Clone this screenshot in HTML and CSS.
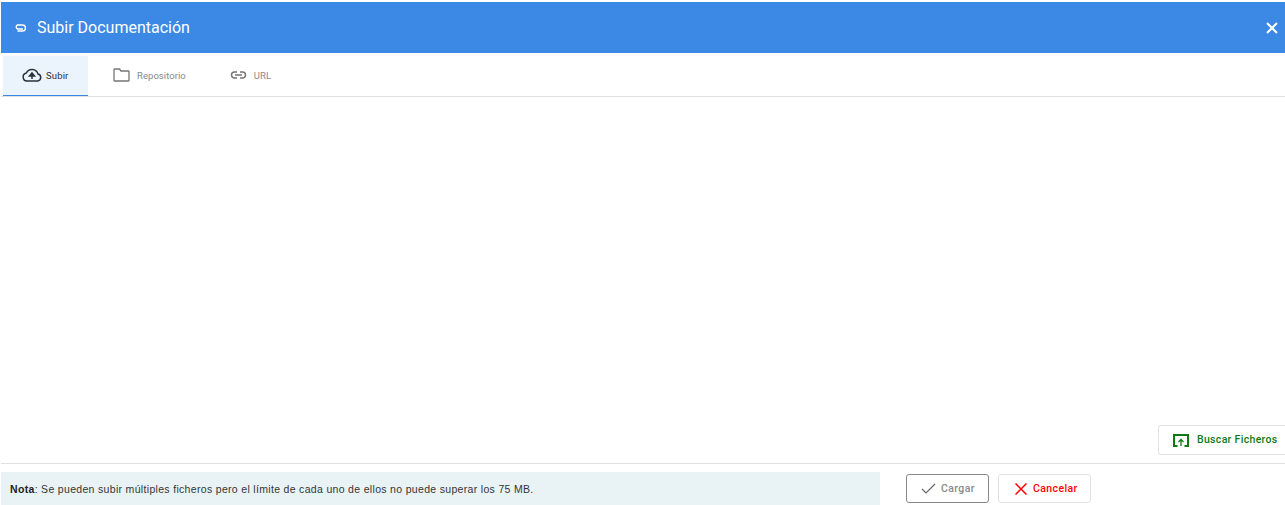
FILE: index.html
```html
<!DOCTYPE html>
<html lang="es">
<head>
<meta charset="utf-8">
<title>Subir Documentación</title>
<link rel="stylesheet" href="styles.css">
</head>
<body>
<div class="dialog">
  <header class="titlebar">
    <div class="title">
      <svg class="clip" width="12" height="8" viewBox="0 0 12 8"><path d="M3.500 7H8.500A2.800 2.800 0 0 0 8.500 1H3.500A2.200 2.200 0 0 0 3.500 5H9" fill="none" stroke="#fff" stroke-width="1.400"/></svg>
      <span>Subir Documentación</span>
    </div>
    <svg class="close" width="12" height="12" viewBox="0 0 12 12"><path d="M1 1L11 11M11 1L1 11" stroke="#fff" stroke-width="2"/></svg>
  </header>
  <nav class="tabs">
    <div class="tab active">
      <svg width="20" height="14" viewBox="0 0 20 14"><path d="M5 13H15.500A3.500 3.500 0 0 0 16 6.100A6.300 6.300 0 0 0 4.300 5.100A4 4 0 0 0 5 13Z" fill="none" stroke="#29323d" stroke-width="1.500"/><path d="M10 11V7M7.500 8L10 5L12.500 8Z" stroke="#29323d" stroke-width="1.500" fill="#29323d"/></svg>
      <span>Subir</span>
    </div>
    <div class="tab">
      <svg width="17" height="14" viewBox="0 0 17 14"><path d="M1 3V12.500A.5.5 0 0 0 1.500 13H15.500A.5.5 0 0 0 16 12.500V3.500A.5.5 0 0 0 15.500 3H8L6.500 1H1.500A.5.5 0 0 0 1 1.500Z" fill="none" stroke="#757575" stroke-width="1.300"/></svg>
      <span>Repositorio</span>
    </div>
    <div class="tab">
      <svg width="17" height="8" viewBox="0 0 17 8"><path d="M7 1H4.500A3 3 0 0 0 4.500 7H7M10 1H12.500A3 3 0 0 1 12.500 7H10M5 4H12" fill="none" stroke="#757575" stroke-width="1.500"/></svg>
      <span>URL</span>
    </div>
  </nav>
  <main class="content">
    <button class="browse" type="button">
      <svg width="16" height="14" viewBox="0 0 16 14"><path d="M4.500 13H1V2H15V13H11.500" fill="none" stroke="#0f7a12" stroke-width="2"/><path d="M8 13V7M5.500 9L8 6.500L10.500 9" fill="none" stroke="#0f7a12" stroke-width="1.300"/></svg>
      <span>Buscar Ficheros</span>
    </button>
  </main>
  <footer class="footer">
    <p class="note"><b>Nota</b>: Se pueden subir múltiples ficheros pero el límite de cada uno de ellos no puede superar los 75 MB.</p>
    <div class="actions">
      <button class="btn load" type="button">
        <svg width="15" height="11" viewBox="0 0 15 11"><path d="M1 6L5 10L14 1" fill="none" stroke="#666" stroke-width="1.200"/></svg>
        <span>Cargar</span>
      </button>
      <button class="btn cancel" type="button">
        <svg width="12" height="12" viewBox="0 0 12 12"><path d="M.5.5L11.500 11.500M11.500.5L.5 11.500" stroke="#f00" stroke-width="1.500"/></svg>
        <span>Cancelar</span>
      </button>
    </div>
  </footer>
</div>
</body>
</html>
```

FILE: styles.css
```css
* { box-sizing: border-box; }
html, body { margin: 0; height: 100%; background: #fff; overflow: hidden; }
body { font-family: Roboto, "Liberation Sans", sans-serif; }
svg { flex: none; }
.dialog { height: 505px; padding: 2px 0 0 1px; display: flex; flex-direction: column; }
.titlebar { height: 51px; background: #3c89e5; color: #fff; display: flex; align-items: center; justify-content: space-between; padding: 0 0 0 13px; flex: none; }
.title { display: flex; align-items: center; gap: 11px; font-size: 16px; }
.clip { margin-top: 1px; }
.close { margin-right: 7px; }
.tabs { height: 44px; border-bottom: 1px solid #e0e0e0; padding: 3px 0 0 2px; display: flex; gap: 7px; flex: none; }
.tab { display: flex; align-items: center; padding: 0 18px 2px; gap: 7px; font-size: 9.5px; letter-spacing: .05px; color: #8a8a8a; }
.tab:last-child { margin-left: 1px; }
.tab.active { width: 85px; padding: 0 0 1px 19px; background: #ebf3fc; border-bottom: 1px solid #3c89e5; color: #29323d; gap: 4px; letter-spacing: .15px; }
.content { flex: 1; display: flex; justify-content: flex-end; align-items: flex-end; padding-bottom: 8px; border-bottom: 1px solid #e0e0e0; }
.browse { width: 127px; height: 30px; background: #fff; border: 1px solid #e4e4e4; border-right: none; border-radius: 3px 0 0 3px; color: #0f7a12; font: 500 10.5px Roboto, sans-serif; letter-spacing: .32px; display: flex; align-items: center; gap: 8px; padding: 0 0 2px 14px; }
.browse svg { margin-top: 2px; }
.footer { height: 41px; flex: none; display: flex; align-items: flex-start; padding-top: 8px; }
.note { margin: 0; width: 879px; height: 33px; background: #e9f3f6; font: 10.500px/34px "Liberation Sans", sans-serif; letter-spacing: .32px; color: #333; padding-left: 9px; }
.note b { color: #222; }
.actions { display: flex; gap: 9px; margin: 2px 0 0 26px; }
.btn { height: 29px; border-radius: 3px; background: #fff; display: flex; align-items: center; font: 500 10.5px Roboto, sans-serif; letter-spacing: .4px; padding: 0; }
.load { width: 83px; border: 1px solid #888; color: #8a8a8a; gap: 5px; padding-left: 14px; }
.cancel { width: 93px; border: 1px solid #e2e2e2; color: #f00; gap: 6px; padding-left: 16px; }
```
